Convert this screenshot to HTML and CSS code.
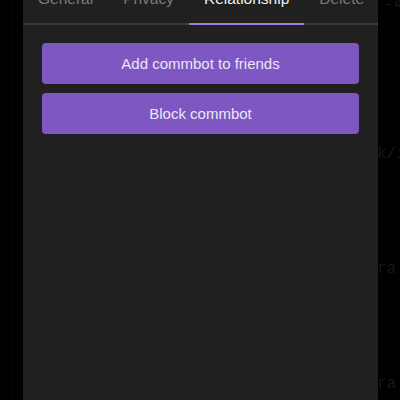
FILE: index.html
```html
<!DOCTYPE html>
<html>
<head>
<meta charset="utf-8">
<link rel="stylesheet" href="styles.css">
</head>
<body>
<div class="backdrop">
  <div class="bg-rule"></div>
  <pre class="bg-code"><span class="l1">-4</span><span class="l2">k/i</span><span class="l3">ra</span><span class="l4">ra</span></pre>
</div>
<div class="panel">
  <div class="tabs">
    <div class="tab">General</div>
    <div class="tab">Privacy</div>
    <div class="tab active">Relationship</div>
    <div class="tab">Delete</div>
  </div>
  <div class="actions">
    <button class="btn">Add commbot to friends</button>
    <button class="btn">Block commbot</button>
  </div>
</div>
</body>
</html>
```
FILE: styles.css
```css
html, body {
  margin: 0;
  padding: 0;
  background: #000;
  height: 400px;
  overflow: hidden;
  font-family: "Liberation Sans", Arial, sans-serif;
}
.backdrop {
  position: absolute;
  inset: 0;
  z-index: 0;
}
.bg-rule {
  position: absolute;
  left: 12px;
  top: 0;
  width: 1px;
  height: 400px;
  background: #0a0a0a;
}
.bg-code {
  margin: 0;
  font-family: "Liberation Mono", monospace;
  font-size: 16px;
  color: #171717;
}
.bg-code span {
  position: absolute;
  left: 377px;
}
.bg-code .l1 { top: -4px; left: 384px; }
.bg-code .l2 { top: 145px; }
.bg-code .l3 { top: 260px; }
.bg-code .l4 { top: 375px; }
.panel {
  position: relative;
  z-index: 1;
  margin-left: 23px;
  width: 355px;
  height: 420px;
  margin-top: -18px;
  background: #202020;
}
.tabs {
  display: flex;
  border-bottom: 2px solid #3a3a3a;
  height: 43px;
  box-sizing: border-box;
}
.tab {
  padding: 8px 15px 0;
  font-size: 15.5px;
  color: #7a7a7a;
  line-height: 18px;
  position: relative;
}
.tab.active {
  color: #f0f0f0;
}
.tab.active::after {
  content: "";
  position: absolute;
  left: 0;
  right: 0;
  bottom: -2px;
  height: 2px;
  background: #a07de0;
}
.actions {
  display: flex;
  flex-direction: column;
  gap: 9px;
  padding: 18px 19px 0;
}
.btn {
  height: 41px;
  border: none;
  border-radius: 4px;
  background: #7e57c2;
  color: #ece6f5;
  font-family: "Liberation Sans", Arial, sans-serif;
  font-size: 15px;
  padding: 0;
}
```
